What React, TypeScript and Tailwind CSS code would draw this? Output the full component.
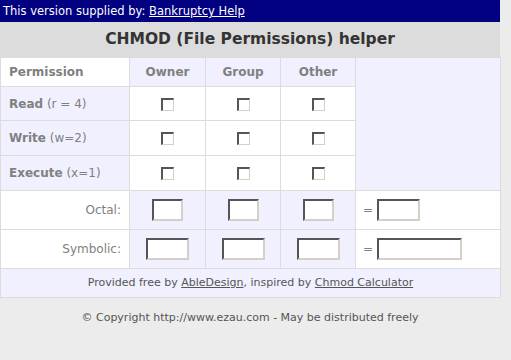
import React from "react";

const font = { fontFamily: '"DejaVu Sans", Verdana, sans-serif' };

function Check() {
  return (
    <span className="inline-block w-[13px] h-[13px] bg-white border-t-2 border-l-2 border-b border-r border-t-[#555] border-l-[#555] border-b-[#d4d0c8] border-r-[#d4d0c8] align-middle" />
  );
}

function Box({ w }: { w: string }) {
  return (
    <span
      className={`inline-block ${w} h-[22px] bg-white border-t-2 border-l-2 border-b-2 border-r-2 border-t-[#555] border-l-[#555] border-b-[#d4d0c8] border-r-[#d4d0c8] align-middle`}
    />
  );
}

export default function App() {
  const cell = "border border-[#dcdcdc]";
  const rows: [string, string, string][] = [
    ["Read", "(r = 4)", "h-[34px]"],
    ["Write", "(w=2)", "h-[35px]"],
    ["Execute", "(x=1)", "h-[35px]"],
  ];
  return (
    <div className="min-h-[360px] bg-[#ececec]" style={font}>
      <div className="w-[500px]">
        <div className="h-[22px] bg-[#000080] text-white text-[11.5px] leading-[22px] pl-[3px]">
          This version supplied by: <span className="underline">Bankruptcy Help</span>
        </div>
        <div className="h-[35px] bg-[#dcdcdc] text-[#333] text-[15.5px] font-bold flex items-center justify-center">
          CHMOD (File Permissions) helper
        </div>
        <table className="w-[500px] table-fixed border-collapse text-[12px] text-[#808080]">
          <colgroup>
            <col className="w-[129px]" />
            <col className="w-[76px]" />
            <col className="w-[75px]" />
            <col className="w-[75px]" />
            <col className="w-[145px]" />
          </colgroup>
          <tbody>
            <tr className="h-[29px]">
              <td className={`${cell} bg-white font-bold pl-[8px]`}>Permission</td>
              <td className={`${cell} bg-[#f0f0ff] font-bold text-center`}>Owner</td>
              <td className={`${cell} bg-[#f0f0ff] font-bold text-center`}>Group</td>
              <td className={`${cell} bg-[#f0f0ff] font-bold text-center`}>Other</td>
              <td className={`${cell} bg-[#f0f0ff]`} rowSpan={4}></td>
            </tr>
            {rows.map(([a, b, h]) => (
              <tr key={a} className={h}>
                <td className={`${cell} bg-[#f0f0ff] pl-[8px]`}>
                  <span className="font-bold">{a}</span> {b}
                </td>
                <td className={`${cell} bg-white text-center`}><Check /></td>
                <td className={`${cell} bg-white text-center`}><Check /></td>
                <td className={`${cell} bg-white text-center`}><Check /></td>
              </tr>
            ))}
            <tr className="h-[39px]">
              <td className={`${cell} bg-white text-right pr-[8px]`}>Octal:</td>
              <td className={`${cell} bg-[#f0f0ff] text-center`}><Box w="w-[31px]" /></td>
              <td className={`${cell} bg-[#f0f0ff] text-center`}><Box w="w-[31px]" /></td>
              <td className={`${cell} bg-[#f0f0ff] text-center`}><Box w="w-[31px]" /></td>
              <td className={`${cell} bg-white pl-[7px]`}>
                <span className="inline-flex items-center gap-[4px]">= <Box w="w-[43px]" /></span>
              </td>
            </tr>
            <tr className="h-[39px]">
              <td className={`${cell} bg-white text-right pr-[8px]`}>Symbolic:</td>
              <td className={`${cell} bg-[#f0f0ff] text-center`}><Box w="w-[43px]" /></td>
              <td className={`${cell} bg-[#f0f0ff] text-center`}><Box w="w-[43px]" /></td>
              <td className={`${cell} bg-[#f0f0ff] text-center`}><Box w="w-[43px]" /></td>
              <td className={`${cell} bg-white pl-[7px]`}>
                <span className="inline-flex items-center gap-[4px]">= <Box w="w-[85px]" /></span>
              </td>
            </tr>
            <tr className="h-[29px]">
              <td colSpan={5} className={`${cell} bg-[#f0f0ff] text-center text-[11px] text-[#555]`}>
                Provided free by <span className="underline">AbleDesign</span>, inspired by{" "}
                <span className="underline">Chmod Calculator</span>
              </td>
            </tr>
          </tbody>
        </table>
        <div className="pt-[12px] text-center text-[11px] text-[#555]">
          © Copyright http://www.ezau.com - May be distributed freely
        </div>
      </div>
    </div>
  );
}
